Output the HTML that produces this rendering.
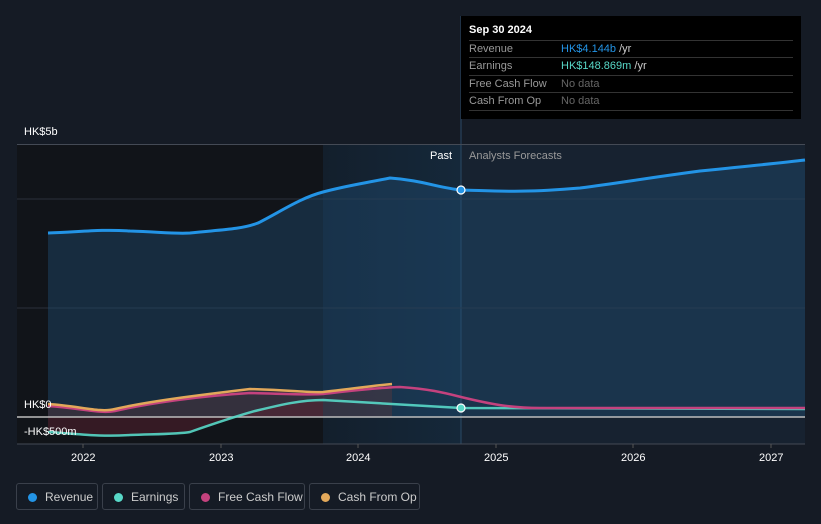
<!DOCTYPE html>
<html><head><meta charset="utf-8"><style>
body{margin:0;width:821px;height:524px;background:#151b25;font-family:"Liberation Sans",sans-serif;overflow:hidden;position:relative}
.t{position:absolute;font-size:11px;color:#fff}
.tip{position:absolute;left:461px;top:16px;width:340px;height:103px;background:#000;}
.tip .h{position:absolute;left:8px;top:8px;color:#fff;font-size:11px;font-weight:bold}
.row{position:absolute;left:8px;width:324px;border-top:1px solid #333;height:17px;font-size:11px;line-height:17px;color:#999}
.row span{position:absolute;left:92px}
.lg{position:absolute;top:483px;height:27px;border:1px solid #3a404b;border-radius:3px;color:#ccc;font-size:12px;line-height:27px;box-sizing:border-box}
.lg i{position:absolute;left:11px;top:9px;width:9px;height:9px;border-radius:50%}
.lg b{font-weight:normal;position:absolute;left:28px}
</style></head><body>
<svg width="821" height="524" style="position:absolute;left:0;top:0">
<defs><linearGradient id="g" x1="0" x2="1"><stop offset="0" stop-color="#131f2c"/><stop offset="1" stop-color="#15283a"/></linearGradient></defs>
<rect x="17" y="144" width="306" height="300" fill="#111419"/>
<rect x="323" y="144" width="138" height="300" fill="url(#g)"/>
<rect x="461" y="144" width="344" height="300" fill="#172230"/>
<line x1="461" y1="16" x2="461" y2="444" stroke="#2a4a66" stroke-width="1"/>
<line x1="17" y1="144.5" x2="805" y2="144.5" stroke="#444a55"/>
<line x1="17" y1="199" x2="805" y2="199" stroke="#2a303a"/>
<line x1="17" y1="308" x2="805" y2="308" stroke="#2a303a"/>
<line x1="17" y1="444" x2="805" y2="444" stroke="#444a55"/>
<path d="M48,233 C80,232 100,229 130,231 C160,232 175,234 190,233 C215,230 240,230 258,223 C280,212 300,198 323,192 C345,186 360,184 390,178 C420,180 440,188 461,190 C500,191 520,193 580,188 C620,183 640,179 700,171 C740,167 780,163 805,160 L805,417 L48,417Z" fill="#215078" fill-opacity="0.4"/>
<path d="M48,404 C80,406 100,413 115,409 C150,401 200,395 250,389 C290,390 310,393 323,392 C350,389 370,386 392,384 L392,417 L48,417Z" fill="#6a3a3a" fill-opacity="0.35"/>
<path d="M48,417 L48,432 C80,434 100,437 130,435 C160,434 180,434 190,432 C210,425 230,418 255,411 C280,405 300,400 323,400 L323,417Z" fill="#5a2030" fill-opacity="0.5"/>
<line x1="17" y1="417" x2="805" y2="417" stroke="#bdbdbd" stroke-width="1.5"/>
<path d="M48,233 C80,232 100,229 130,231 C160,232 175,234 190,233 C215,230 240,230 258,223 C280,212 300,198 323,192 C345,186 360,184 390,178 C420,180 440,188 461,190 C500,191 520,193 580,188 C620,183 640,179 700,171 C740,167 780,163 805,160" fill="none" stroke="#2394e6" stroke-width="3"/>
<path d="M48,432 C80,434 100,437 130,435 C160,434 180,434 190,432 C210,425 230,418 255,411 C280,405 300,400 323,400 C360,402 410,405 461,408 C520,409 600,409 805,409" fill="none" stroke="#58d8c8" stroke-width="2.5" stroke-opacity="0.9"/>
<path d="M48,406 C80,408 100,414 115,411 C150,403 200,396 250,393 C290,394 310,395 323,394 C350,391 370,388 400,387 C430,389 445,393 461,397 C490,404 510,408 540,408 C600,408 700,408 805,408" fill="none" stroke="#c4427e" stroke-width="2.5"/>
<path d="M48,404 C80,406 100,413 115,409 C150,401 200,395 250,389 C290,390 310,393 323,392 C350,389 370,386 392,384" fill="none" stroke="#e2a85a" stroke-width="2.5"/>
<circle cx="461" cy="190" r="4" fill="#2394e6" stroke="#fff" stroke-width="1.2"/>
<circle cx="461" cy="408" r="4" fill="#58d8c8" stroke="#fff" stroke-width="1.2"/>
<g stroke="#555"><line x1="83" y1="444" x2="83" y2="448"/><line x1="221" y1="444" x2="221" y2="448"/><line x1="358" y1="444" x2="358" y2="448"/><line x1="496" y1="444" x2="496" y2="448"/><line x1="633" y1="444" x2="633" y2="448"/><line x1="771" y1="444" x2="771" y2="448"/></g>
</svg>
<div class="t" style="left:24px;top:126px">HK$5b</div>
<div class="t" style="left:24px;top:399px">HK$0</div>
<div class="t" style="left:24px;top:426px">-HK$500m</div>
<div class="t" style="left:430px;top:150px">Past</div>
<div class="t" style="left:469px;top:150px;color:#999">Analysts Forecasts</div>
<div class="t" style="left:71px;top:452px">2022</div>
<div class="t" style="left:209px;top:452px">2023</div>
<div class="t" style="left:346px;top:452px">2024</div>
<div class="t" style="left:484px;top:452px">2025</div>
<div class="t" style="left:621px;top:452px">2026</div>
<div class="t" style="left:759px;top:452px">2027</div>
<div class="tip"><div class="h">Sep 30 2024</div>
<div class="row" style="top:24px">Revenue<span style="color:#2394e6">HK$4.144b <em style="font-style:normal;color:#ccc">/yr</em></span></div>
<div class="row" style="top:41px">Earnings<span style="color:#58d8c8">HK$148.869m <em style="font-style:normal;color:#ccc">/yr</em></span></div>
<div class="row" style="top:59px">Free Cash Flow<span style="color:#666">No data</span></div>
<div class="row" style="top:76px;border-bottom:1px solid #333">Cash From Op<span style="color:#666">No data</span></div>
</div>
<div class="lg" style="left:16px;width:82px"><i style="background:#2394e6"></i><b>Revenue</b></div>
<div class="lg" style="left:102px;width:83px"><i style="background:#58d8c8"></i><b>Earnings</b></div>
<div class="lg" style="left:189px;width:116px"><i style="background:#c4427e"></i><b>Free Cash Flow</b></div>
<div class="lg" style="left:309px;width:111px"><i style="background:#e2a85a"></i><b>Cash From Op</b></div>
</body></html>
